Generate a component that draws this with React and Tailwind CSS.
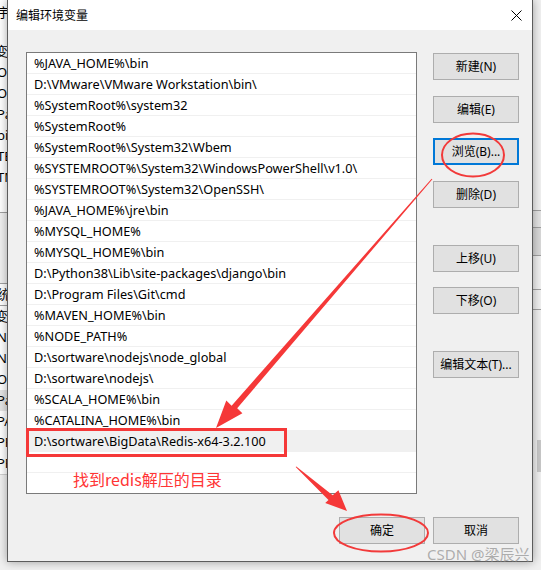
import React from 'react';

const paths = [
  '%JAVA_HOME%\\bin',
  'D:\\VMware\\VMware Workstation\\bin\\',
  '%SystemRoot%\\system32',
  '%SystemRoot%',
  '%SystemRoot%\\System32\\Wbem',
  '%SYSTEMROOT%\\System32\\WindowsPowerShell\\v1.0\\',
  '%SYSTEMROOT%\\System32\\OpenSSH\\',
  '%JAVA_HOME%\\jre\\bin',
  '%MYSQL_HOME%',
  '%MYSQL_HOME%\\bin',
  'D:\\Python38\\Lib\\site-packages\\django\\bin',
  'D:\\Program Files\\Git\\cmd',
  '%MAVEN_HOME%\\bin',
  '%NODE_PATH%',
  'D:\\sortware\\nodejs\\node_global',
  'D:\\sortware\\nodejs\\',
  '%SCALA_HOME%\\bin',
  '%CATALINA_HOME%\\bin',
  'D:\\sortware\\BigData\\Redis-x64-3.2.100',
];

// background window peeking out on the left
const behindTop = ['Oi', 'Oi', 'Pa', 'bi', 'TE', 'TM'];
const behindBottom = ['NO', 'NU', 'OS', 'Pa', 'PA', 'PR', 'PR'];

const font = { fontFamily: '"Noto Sans", "Noto Sans CJK SC", sans-serif' };

const Button = ({ children, focused, className = '' }) => (
  <div
    className={`w-[86px] h-[27px] flex items-center justify-center bg-[#e1e1e1] text-[12px] text-black ${
      focused ? 'border-2 border-[#0078d7]' : 'border border-[#adadad]'
    } ${className}`}
  >
    {children}
  </div>
);

const Annotations = () => (
  <svg className="absolute inset-0 pointer-events-none z-20" width="541" height="570" viewBox="0 0 541 570">
    {/* circle around browse */}
    <ellipse cx="473" cy="155" rx="31" ry="21.5" fill="none" stroke="#f23a3a" strokeWidth="2" />
    {/* long arrow to redis row */}
    <polygon
      points="432.4,179.3 431.6,178.7 231.6,405.8 226.3,400.6 216,428 242.4,413.2 237.2,408.2"
      fill="#f53838"
    />
    {/* box around redis row */}
    <rect x="27.5" y="429.5" width="258" height="26" fill="none" stroke="#f53838" strokeWidth="3" />
    {/* short arrow to OK */}
    <polygon
      points="296.3,466.4 295.7,467.1 328.5,499.9 325.2,503 347,511 338.4,490.3 332.7,495.2"
      fill="#f53838"
    />
    {/* circle around OK */}
    <ellipse cx="381" cy="533" rx="47" ry="18.5" fill="none" stroke="#f23a3a" strokeWidth="2" />
  </svg>
);

export default function App() {
  return (
    <div className="relative w-[541px] h-[570px] overflow-hidden bg-[#f0f0f0] flex" style={font}>
      {/* left strip of the window behind */}
      <div className="w-[7px] h-full bg-white overflow-hidden flex flex-col text-[13px] text-black leading-[21px]">
        <div className="h-[31px] pt-[2px] -ml-[3px] whitespace-nowrap">宇</div>
        <div className="h-[10px]" />
        <div className="h-[21px] -ml-[5px] whitespace-nowrap">变</div>
        {behindTop.map((t, i) => (
          <div key={i} className="h-[21px] -ml-[3px] whitespace-nowrap">{t}</div>
        ))}
        <div className="h-[24px]" />
        <div className="h-[72px] bg-[#f0f0f0] border-y border-[#a0a0a0]" />
        <div className="h-[22px] -ml-[3px] whitespace-nowrap border-b border-[#a0a0a0]">统</div>
        <div className="h-[21px] -ml-[5px] whitespace-nowrap">变</div>
        {behindBottom.map((t, i) => (
          <div key={i} className={`h-[21px] -ml-[3px] whitespace-nowrap ${i === 3 ? 'bg-[#e5e5e5]' : ''}`}>
            {t}
          </div>
        ))}
        <div className="flex-1 border-t border-[#d0d0d0] bg-[#f0f0f0]" />
      </div>

      {/* dialog */}
      <div className="relative w-[526px] h-[562px] border-x border-b border-[#5c5c5c] bg-[#f0f0f0] flex flex-col shadow-[0_0_9px_rgba(0,0,0,0.35)] z-10">
        <div className="h-[30px] bg-white flex items-center justify-between pl-[8px] pr-[10px]">
          <span className="text-[12px] text-black" style={{ fontFamily: '"Noto Sans CJK SC", sans-serif' }}>
            编辑环境变量
          </span>
          <svg width="11" height="11" viewBox="0 0 11 11">
            <path d="M0.5 0.5 L10.5 10.5 M10.5 0.5 L0.5 10.5" stroke="#000" strokeWidth="1" />
          </svg>
        </div>

        <div className="flex-1 flex flex-col pt-[22px] pl-[18px] pr-[13px] pb-[17px]">
          <div className="flex-1 flex gap-[16px]">
            <div className="w-[391px] h-[442px] bg-white border border-[#7a7a7a] flex flex-col overflow-hidden">
              {paths.map((p, i) => (
                <div
                  key={i}
                  className={`h-[21px] shrink-0 flex items-center pl-[7px] pt-[1px] text-[12.7px] text-black whitespace-nowrap border-b border-[#f0f0f0] ${
                    i === paths.length - 1 ? 'bg-[#f0f0f0]' : ''
                  }`}
                >
                  {p}
                </div>
              ))}
              <div className="h-[21px] shrink-0 border-b border-[#f0f0f0]" />
            </div>

            <div className="flex flex-col">
              <Button className="mt-[1px]">新建(N)</Button>
              <Button className="mt-[16px]">编辑(E)</Button>
              <Button focused className="mt-[15px]">浏览(B)...</Button>
              <Button className="mt-[16px]">删除(D)</Button>
              <Button className="mt-[37px]">上移(U)</Button>
              <Button className="mt-[15px]">下移(O)</Button>
              <Button className="mt-[37px]">编辑文本(T)...</Button>
            </div>
          </div>

          <div className="flex justify-end gap-[8px]">
            <Button>确定</Button>
            <Button>取消</Button>
          </div>
        </div>
      </div>

      {/* right strip of the window behind */}
      <div className="flex-1 h-full bg-[#f0f0f0] flex flex-col">
        <div className="h-[210px]" />
        <div className="h-[18px] border-y border-[#a0a0a0] bg-[#e3e3e3]" />
        <div className="h-[28px] border-b border-[#a0a0a0] bg-[#d8d8d8]" />
        <div className="h-[34px] border-b border-[#a0a0a0]" />
        <div className="h-[20px] border-b border-[#a0a0a0]" />
        <div className="flex-1 flex justify-end">
          <div className="w-[4px] mt-[130px] h-[32px] bg-[#c8c8c8]" />
        </div>
      </div>

      <Annotations />

      <div
        className="absolute left-[73px] top-[468px] text-[16px] leading-[22px] text-[#ff3535] z-20"
        style={{ fontFamily: '"Noto Sans CJK SC", sans-serif' }}
      >
        找到redis解压的目录
      </div>

      <div
        className="absolute left-[427px] top-[544px] text-[15px] leading-[20px] text-[rgba(150,150,150,0.75)] z-20 whitespace-nowrap"
        style={{ fontFamily: '"Noto Sans", "Noto Sans CJK SC", sans-serif' }}
      >
        CSDN @梁辰兴
      </div>
    </div>
  );
}
